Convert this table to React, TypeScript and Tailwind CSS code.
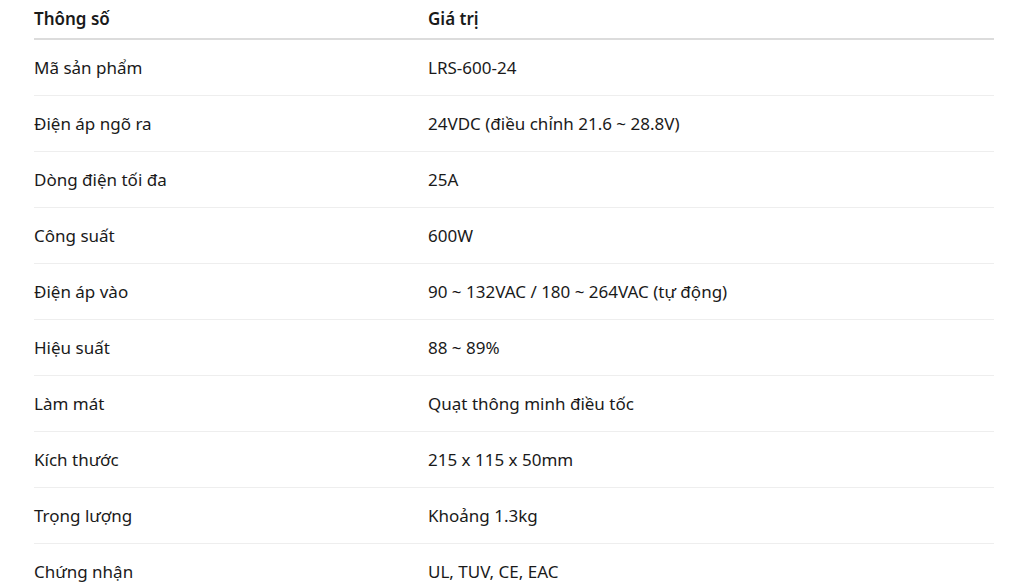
const specs = [
  ["Mã sản phẩm", "LRS-600-24"],
  ["Điện áp ngõ ra", "24VDC (điều chỉnh 21.6 ~ 28.8V)"],
  ["Dòng điện tối đa", "25A"],
  ["Công suất", "600W"],
  ["Điện áp vào", "90 ~ 132VAC / 180 ~ 264VAC (tự động)"],
  ["Hiệu suất", "88 ~ 89%"],
  ["Làm mát", "Quạt thông minh điều tốc"],
  ["Kích thước", "215 x 115 x 50mm"],
  ["Trọng lượng", "Khoảng 1.3kg"],
  ["Chứng nhận", "UL, TUV, CE, EAC"],
];

export default function App() {
  return (
    <div className="w-[1024px] h-[585px] overflow-hidden bg-white font-['Noto_Sans',sans-serif] text-[17px] text-[#1a1a1a]">
      <table className="ml-[34px] w-[960px] border-collapse">
        <thead>
          <tr className="border-b-2 border-[#dcdcdc]">
            <th className="w-[394px] pt-[7px] pb-[7px] text-left font-semibold leading-6">Thông số</th>
            <th className="pt-[7px] pb-[7px] text-left font-semibold leading-6">Giá trị</th>
          </tr>
        </thead>
        <tbody>
          {specs.map(([label, value]) => (
            <tr key={label} className="border-b border-[#eeeeee]">
              <td className="pt-4 pb-[15px] leading-6">{label}</td>
              <td className="pt-4 pb-[15px] leading-6">{value}</td>
            </tr>
          ))}
        </tbody>
      </table>
    </div>
  );
}
